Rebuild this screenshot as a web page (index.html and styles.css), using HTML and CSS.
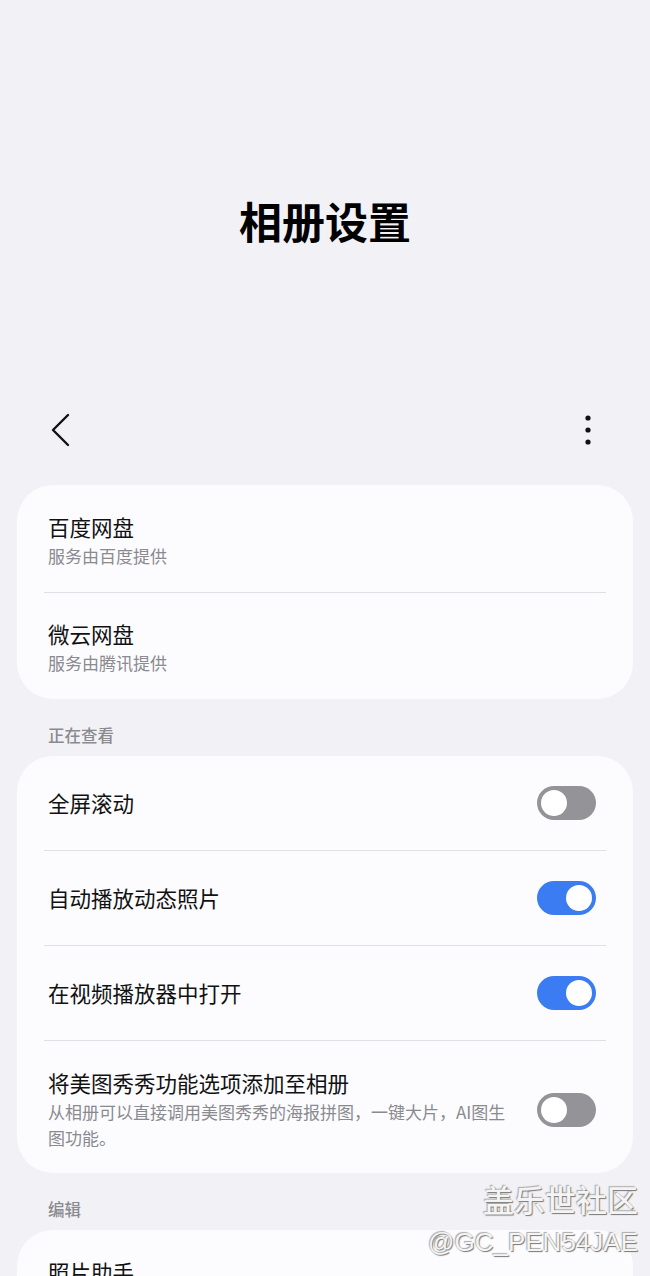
FILE: index.html
```html
<!DOCTYPE html>
<html lang="zh-CN">
<head>
    <meta charset="UTF-8">
    <meta name="viewport" content="width=device-width, initial-scale=1.0">
    <title>相册设置</title>
    <link rel="stylesheet" href="styles.css">
</head>
<body>
    <div class="hero">
        <h1>相册设置</h1>
    </div>
    <div class="toolbar">
        <svg class="back" width="24" height="36" viewBox="0 0 24 36">
            <path d="M18 3 L3 18 L18 33" fill="none" stroke="#111" stroke-width="2.4" stroke-linecap="round" stroke-linejoin="round"/>
        </svg>
        <svg class="more" width="10" height="32" viewBox="0 0 10 32">
            <circle cx="5" cy="4" r="2.6" fill="#111"/>
            <circle cx="5" cy="16" r="2.6" fill="#111"/>
            <circle cx="5" cy="28" r="2.6" fill="#111"/>
        </svg>
    </div>

    <div class="card">
        <div class="row two-line">
            <div class="text">
                <div class="title">百度网盘</div>
                <div class="sub">服务由百度提供</div>
            </div>
        </div>
        <div class="row two-line">
            <div class="text">
                <div class="title">微云网盘</div>
                <div class="sub">服务由腾讯提供</div>
            </div>
        </div>
    </div>

    <div class="section">正在查看</div>
    <div class="card">
        <div class="row single">
            <div class="text"><div class="title">全屏滚动</div></div>
            <div class="switch"></div>
        </div>
        <div class="row single">
            <div class="text"><div class="title">自动播放动态照片</div></div>
            <div class="switch on"></div>
        </div>
        <div class="row single">
            <div class="text"><div class="title">在视频播放器中打开</div></div>
            <div class="switch on"></div>
        </div>
        <div class="row multi">
            <div class="text">
                <div class="title">将美图秀秀功能选项添加至相册</div>
                <div class="sub">从相册可以直接调用美图秀秀的海报拼图，一键大片，AI图生图功能。</div>
            </div>
            <div class="switch"></div>
        </div>
    </div>

    <div class="section">编辑</div>
    <div class="card">
        <div class="row two-line">
            <div class="text"><div class="title">照片助手</div></div>
        </div>
    </div>

    <div class="watermark">
        <div class="wm-big">盖乐世社区</div>
        <div class="wm-small">@GC_PEN54JAE</div>
    </div>
</body>
</html>
```

FILE: styles.css
```css
body {
    margin: 0;
    background-color: #f2f2f6;
    font-family: "Noto Sans CJK SC", "Noto Sans", sans-serif;
    color: #111;
    height: 1276px;
    overflow: hidden;
    position: relative;
}
.hero {
    height: 400px;
    box-sizing: border-box;
    padding-top: 193px;
}
.hero h1 {
    margin: 0;
    text-align: center;
    font-size: 43px;
    line-height: 54px;
    font-weight: 700;
    color: #000;
}
.toolbar {
    height: 60px;
    display: flex;
    align-items: center;
    justify-content: space-between;
    padding: 0 57px 0 50px;
}
.card {
    background-color: #fcfcff;
    margin: 25px 17px 0;
    border-radius: 36px;
}
.row {
    display: flex;
    align-items: center;
    margin: 0 27px;
    padding: 0 10px 0 4px;
    gap: 24px;
}
.row + .row {
    border-top: 1.5px solid #dfdfe4;
}
.row .text {
    flex: 1;
}
.title {
    font-size: 21.5px;
    line-height: 28px;
}
.sub {
    font-size: 17px;
    line-height: 22px;
    color: #8a8a8f;
    margin-top: 4px;
}
.two-line {
    padding-top: 28px;
    padding-bottom: 25px;
}
.row.two-line + .row.two-line {
    padding-top: 27px;
}
.single {
    height: 94px;
}
.multi {
    padding-top: 28px;
    padding-bottom: 22px;
}
.multi .sub {
    margin-top: 2px;
    line-height: 26px;
}
.switch {
    width: 59px;
    height: 34px;
    border-radius: 17px;
    background-color: #939398;
    position: relative;
    flex-shrink: 0;
}
.switch::after {
    content: "";
    position: absolute;
    top: 4px;
    left: 4px;
    width: 26px;
    height: 26px;
    border-radius: 50%;
    background-color: #fff;
}
.switch.on {
    background-color: #3b7cf2;
}
.switch.on::after {
    left: 29px;
}
.section {
    margin: 25px 0 -15px 48px;
    font-size: 16.5px;
    line-height: 22px;
    font-weight: 500;
    color: #8a8a8f;
}
.watermark {
    position: absolute;
    right: 12px;
    top: 1180px;
    text-align: right;
    color: #f4f4f4;
    text-shadow: 1px 1px 1px #777, -1px -1px 1px #aaa;
}
.wm-big {
    font-size: 31px;
    line-height: 38px;
    font-weight: 500;
}
.wm-small {
    font-family: "Liberation Sans", sans-serif;
    font-size: 26px;
    line-height: 32px;
    margin-top: 8px;
}
```
